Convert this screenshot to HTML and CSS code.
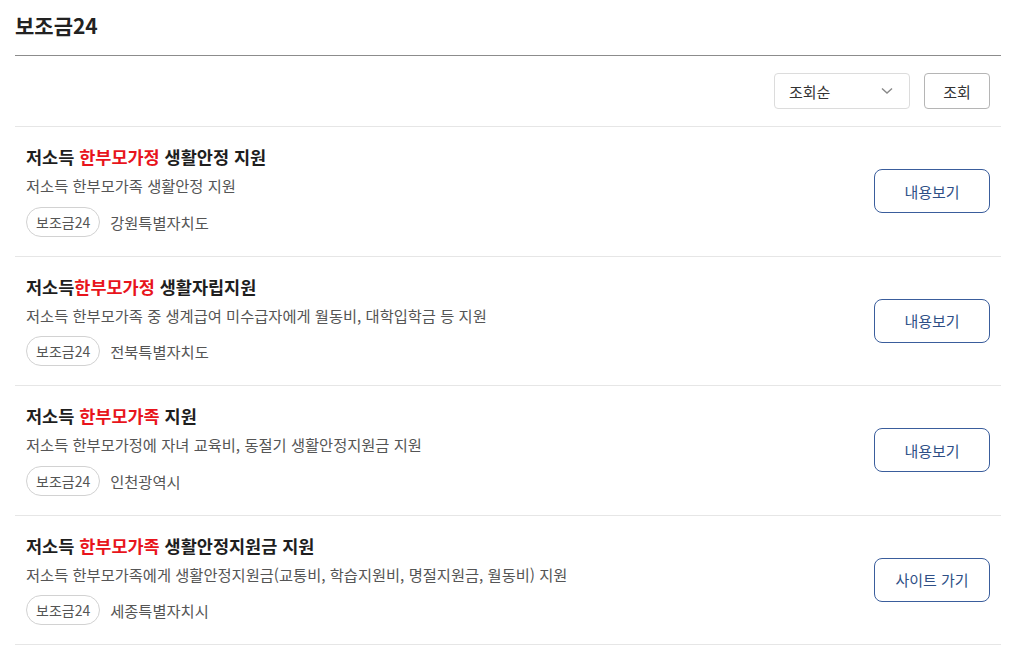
FILE: index.html
```html
<!DOCTYPE html>
<html lang="ko">
<head>
<meta charset="utf-8">
<link rel="stylesheet" href="styles.css">
</head>
<body>
<div class="page">
  <h1 class="page-title">보조금24</h1>
  <div class="toolbar">
    <div class="select">
      <span>조회순</span>
      <svg class="chev" width="12" height="8" viewBox="0 0 12 8"><path d="M1 1.5 L6 6 L11 1.5" fill="none" stroke="#888" stroke-width="1.4"/></svg>
    </div>
    <button class="search-btn">조회</button>
  </div>
  <ul class="list">
    <li class="item">
      <div class="info">
        <div class="title">저소득 <em>한부모가정</em> 생활안정 지원</div>
        <div class="desc">저소득 한부모가족 생활안정 지원</div>
        <div class="meta"><span class="tag">보조금24</span><span class="region">강원특별자치도</span></div>
      </div>
      <button class="action">내용보기</button>
    </li>
    <li class="item">
      <div class="info">
        <div class="title">저소득<em>한부모가정</em> 생활자립지원</div>
        <div class="desc">저소득 한부모가족 중 생계급여 미수급자에게 월동비, 대학입학금 등 지원</div>
        <div class="meta"><span class="tag">보조금24</span><span class="region">전북특별자치도</span></div>
      </div>
      <button class="action">내용보기</button>
    </li>
    <li class="item">
      <div class="info">
        <div class="title">저소득 <em>한부모가족</em> 지원</div>
        <div class="desc">저소득 한부모가정에 자녀 교육비, 동절기 생활안정지원금 지원</div>
        <div class="meta"><span class="tag">보조금24</span><span class="region">인천광역시</span></div>
      </div>
      <button class="action">내용보기</button>
    </li>
    <li class="item">
      <div class="info">
        <div class="title">저소득 <em>한부모가족</em> 생활안정지원금 지원</div>
        <div class="desc">저소득 한부모가족에게 생활안정지원금(교통비, 학습지원비, 명절지원금, 월동비) 지원</div>
        <div class="meta"><span class="tag">보조금24</span><span class="region">세종특별자치시</span></div>
      </div>
      <button class="action">사이트 가기</button>
    </li>
  </ul>
</div>
</body>
</html>
```
FILE: styles.css
```css
* { box-sizing: border-box; }
html, body { margin: 0; padding: 0; background: #fff; }
body {
  font-family: "Noto Sans CJK KR", "Noto Sans", sans-serif;
  color: #222;
}
.page {
  width: 986px;
  margin-left: 15px;
}
.page-title {
  margin: 0;
  padding-top: 10px;
  height: 56px;
  font-size: 21px;
  line-height: 30px;
  font-weight: 700;
  color: #222;
  border-bottom: 1px solid #8c8c8c;
}
.toolbar {
  display: flex;
  justify-content: flex-end;
  align-items: center;
  gap: 14px;
  padding: 17px 11px 17px 0;
  border-bottom: 1px solid #e6e6e6;
}
.select {
  width: 136px;
  height: 36px;
  border: 1px solid #dcdcdc;
  border-radius: 4px;
  display: flex;
  align-items: center;
  justify-content: space-between;
  padding: 0 16px 0 14px;
  font-size: 15px;
  color: #333;
}
.chev { display: block; }
.search-btn {
  width: 66px;
  height: 36px;
  border: 1px solid #b5b5b5;
  border-radius: 4px;
  background: #fff;
  font-family: inherit;
  font-size: 15px;
  color: #333;
  padding: 0;
}
.list {
  list-style: none;
  margin: 0;
  padding: 0;
}
.item {
  display: flex;
  align-items: center;
  justify-content: space-between;
  padding: 19px 11px 19px 11px;
  border-bottom: 1px solid #e6e6e6;
}
.title {
  font-size: 17.5px;
  line-height: 22px;
  font-weight: 700;
  color: #1e1e1e;
}
.title em {
  font-style: normal;
  color: #e8141c;
}
.desc {
  margin-top: 7px;
  font-size: 15.3px;
  line-height: 20px;
  color: #555;
}
.meta {
  margin-top: 11.5px;
  display: flex;
  align-items: center;
  gap: 10px;
}
.tag {
  height: 30px;
  padding: 0 9px;
  border: 1px solid #d2d2d2;
  border-radius: 15px;
  display: inline-flex;
  align-items: center;
  font-size: 14px;
  color: #555;
}
.region {
  font-size: 15.3px;
  color: #555;
}
.action {
  width: 116px;
  height: 44px;
  border: 1px solid #3a5d9c;
  border-radius: 8px;
  background: #fff;
  font-family: inherit;
  font-size: 15px;
  color: #2e4f86;
  padding: 0;
}
```
